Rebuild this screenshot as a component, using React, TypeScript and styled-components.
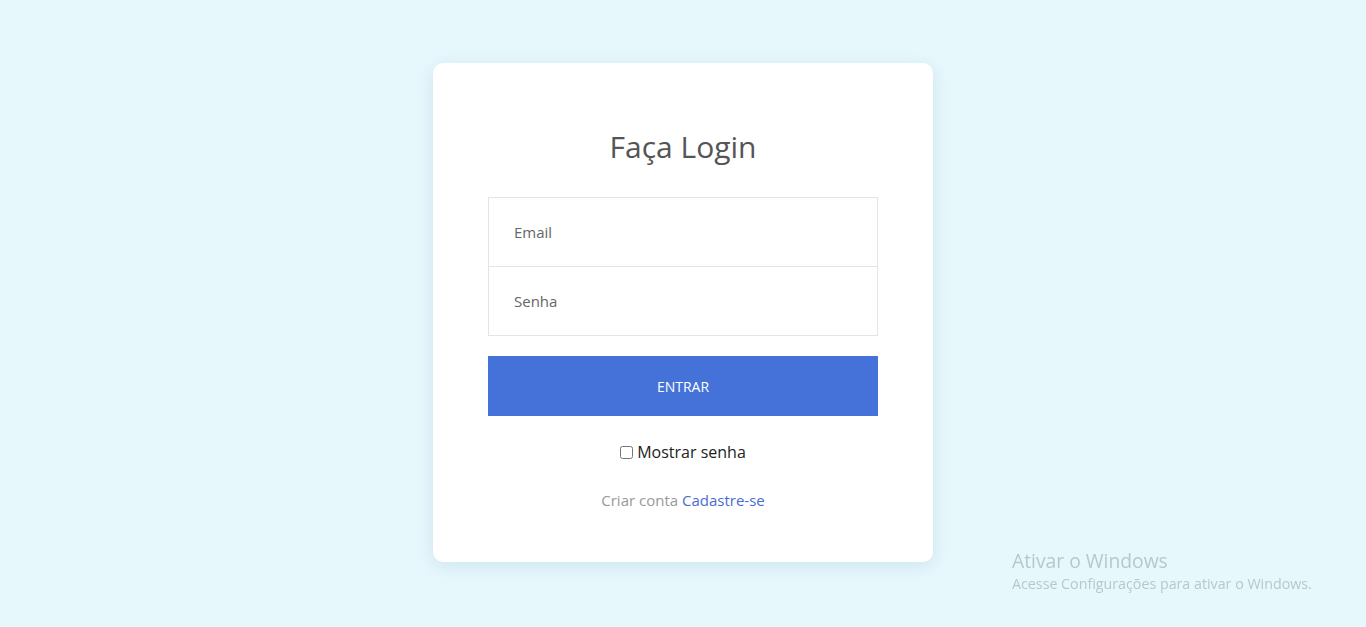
import React from "react";
import styled, { createGlobalStyle } from "styled-components";

const Global = createGlobalStyle`
  html, body { margin: 0; padding: 0; }
  body {
    background: #e7f8fd;
    font-family: "Open Sans", "Noto Sans", sans-serif;
  }
  * { box-sizing: border-box; }
`;

const Page = styled.div`
  width: 100%;
  height: 627px;
  display: flex;
  align-items: flex-start;
  justify-content: center;
  padding-top: 63px;
`;

const Card = styled.form`
  width: 500px;
  height: 499px;
  background: #fff;
  border-radius: 10px;
  box-shadow: 0 4px 18px rgba(120, 160, 180, 0.22);
  padding: 55px 55px 0;
  display: flex;
  flex-direction: column;
  align-items: stretch;
`;

const Title = styled.h1`
  margin: 0 0 21px;
  font-size: 30px;
  font-weight: 400;
  line-height: 58px;
  color: #555;
  text-align: center;
`;

const Fields = styled.div`
  display: flex;
  flex-direction: column;
  border: 1px solid #e4e4e4;
`;

const Input = styled.input<{ $last?: boolean }>`
  height: ${(p) => (p.$last ? 68 : 69)}px;
  border: none;
  border-bottom: ${(p) => (p.$last ? "none" : "1px solid #e4e4e4")};
  padding: 0 25px;
  font-family: "Open Sans", sans-serif;
  font-size: 15px;
  color: #555;
  outline: none;
  &::placeholder { color: #666; }
`;

const Button = styled.button`
  margin-top: 20px;
  height: 60px;
  border: none;
  background: #4472d9;
  color: #fff;
  font-family: "Open Sans", sans-serif;
  font-size: 14px;
  cursor: pointer;
`;

const CheckRow = styled.label`
  margin-top: 24px;
  display: flex;
  justify-content: center;
  align-items: center;
  gap: 4px;
  font-size: 16px;
  line-height: 24px;
  color: #222;
`;

const Check = styled.input`
  width: 13px;
  height: 13px;
  margin: 0;
`;

const SignUp = styled.p`
  margin: 25px 0 0;
  text-align: center;
  font-size: 15px;
  line-height: 22px;
  color: #999;
`;

const Link = styled.a`
  color: #4b6bd0;
  text-decoration: none;
`;

const Watermark = styled.div`
  position: fixed;
  left: 1012px;
  top: 547px;
  color: #b9c6ca;
  font-family: "Open Sans", "Noto Sans", sans-serif;
`;

const WmTitle = styled.div`
  font-size: 19.3px;
  line-height: 28px;
`;

const WmSub = styled.div`
  font-size: 14.25px;
  line-height: 18px;
`;

export default function App() {
  return (
    <>
      <Global />
      <Page>
        <Card onSubmit={(e) => e.preventDefault()}>
          <Title>Faça Login</Title>
          <Fields>
            <Input type="email" placeholder="Email" />
            <Input type="password" placeholder="Senha" $last />
          </Fields>
          <Button type="submit">ENTRAR</Button>
          <CheckRow>
            <Check type="checkbox" />
            Mostrar senha
          </CheckRow>
          <SignUp>
            Criar conta <Link href="#">Cadastre-se</Link>
          </SignUp>
        </Card>
      </Page>
      <Watermark>
        <WmTitle>Ativar o Windows</WmTitle>
        <WmSub>Acesse Configurações para ativar o Windows.</WmSub>
      </Watermark>
    </>
  );
}
